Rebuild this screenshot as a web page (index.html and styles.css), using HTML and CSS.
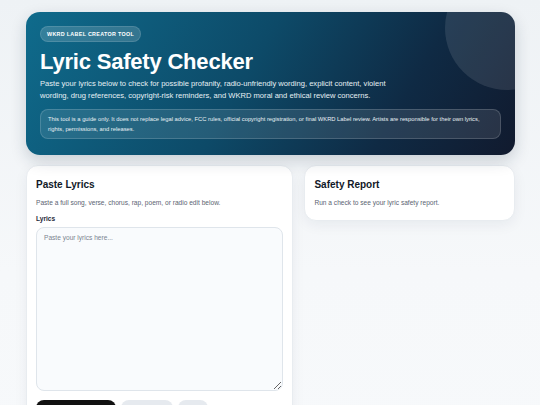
FILE: index.html
```html
<!DOCTYPE html>
<html lang="en">
<head>
<meta charset="utf-8">
<title>Lyric Safety Checker</title>
<link rel="stylesheet" href="styles.css">
</head>
<body>
<div class="page">
  <header class="hero">
    <span class="badge">WKRD LABEL CREATOR TOOL</span>
    <h1 class="title">Lyric Safety Checker</h1>
    <p class="lead">Paste your lyrics below to check for possible profanity, radio-unfriendly wording, explicit content, violent wording, drug references, copyright-risk reminders, and WKRD moral and ethical review concerns.</p>
    <div class="note">This tool is a guide only. It does not replace legal advice, FCC rules, official copyright registration, or final WKRD Label review. Artists are responsible for their own lyrics, rights, permissions, and releases.</div>
  </header>
  <main class="grid">
    <section class="card input-card">
      <h2 class="card-title">Paste Lyrics</h2>
      <p class="card-sub">Paste a full song, verse, chorus, rap, poem, or radio edit below.</p>
      <label class="field-label" for="lyrics">Lyrics</label>
      <textarea id="lyrics" class="lyrics" placeholder="Paste your lyrics here..."></textarea>
      <div class="actions">
        <button class="btn btn-primary">Check Lyrics</button>
        <button class="btn btn-soft btn-sample">Sample</button>
        <button class="btn btn-soft btn-clear">Clear</button>
      </div>
    </section>
    <section class="card report-card">
      <h2 class="card-title">Safety Report</h2>
      <p class="card-sub">Run a check to see your lyric safety report.</p>
    </section>
  </main>
</div>
</body>
</html>
```
FILE: styles.css
```css
* { box-sizing: border-box; }
html, body { margin: 0; padding: 0; }
body {
  font-family: "Liberation Sans", Arial, sans-serif;
  background: linear-gradient(180deg, #eef2f5 0%, #f6f8fa 60%, #f7f9fb 100%);
  color: #111827;
  min-height: 405px;
}
.page {
  padding: 12px 25px 20px 26px;
}
.hero {
  position: relative;
  overflow: hidden;
  border-radius: 14px;
  padding: 14px 14px 16px 14px;
  color: #fff;
  background: linear-gradient(120deg, #0f6b8c 0%, #0d4a68 45%, #0f2a44 75%, #111a2e 100%);
  box-shadow: 0 6px 16px rgba(15, 40, 60, 0.18);
}
.hero::after {
  content: "";
  position: absolute;
  width: 124px;
  height: 124px;
  top: -46px;
  right: -54px;
  border-radius: 50%;
  background: rgba(255, 255, 255, 0.1);
}
.badge {
  display: block;
  width: fit-content;
  height: 16px;
  padding: 0 6px;
  border-radius: 8px;
  background: rgba(255, 255, 255, 0.16);
  border: 1px solid rgba(255, 255, 255, 0.12);
  font-size: 5.4px;
  font-weight: 700;
  letter-spacing: 0.3px;
  line-height: 14px;
}
.title {
  margin: 7px 0 0 0;
  font-size: 22px;
  line-height: 26px;
  font-weight: 700;
  letter-spacing: -0.2px;
}
.lead {
  margin: 3px 0 0 0;
  max-width: 356px;
  font-size: 7.6px;
  line-height: 12px;
  color: #e6f0f4;
}
.note {
  margin-top: 7px;
  padding: 4px 8px 4px 7px;
  border-radius: 8px;
  background: rgba(255, 255, 255, 0.1);
  border: 1px solid rgba(255, 255, 255, 0.16);
  font-size: 5.8px;
  line-height: 10px;
  color: #e8f0f4;
}
.grid {
  margin-top: 10px;
  display: grid;
  grid-template-columns: minmax(0, 1.27fr) minmax(0, 1fr);
  gap: 11px;
  align-items: start;
}
.card {
  background: #fff;
  border-radius: 12px;
  padding: 12px 9px 10px 9px;
  border: 1px solid #e8ecf0;
  box-shadow: 0 4px 14px rgba(20, 40, 60, 0.06);
}
.card-title {
  margin: 0;
  font-size: 10px;
  line-height: 13px;
  font-weight: 700;
  color: #111827;
}
.card-sub {
  margin: 7px 0 0 0;
  font-size: 6.6px;
  line-height: 9px;
  color: #5b6472;
}
.field-label {
  display: block;
  margin-top: 7px;
  font-size: 6.6px;
  line-height: 9px;
  font-weight: 700;
  color: #1f2937;
}
.lyrics {
  display: block;
  width: 100%;
  height: 164px;
  margin-top: 4px;
  padding: 6px 7px;
  border: 1px solid #dfe5eb;
  border-radius: 8px;
  background: #f9fbfd;
  font-family: "Liberation Sans", Arial, sans-serif;
  font-size: 6.6px;
  color: #111827;
  resize: vertical;
}
.lyrics::placeholder { color: #7b8490; }
.actions {
  display: flex;
  gap: 5px;
  margin-top: 9px;
}
.btn {
  height: 22px;
  border: none;
  border-radius: 8px;
  font-family: "Liberation Sans", Arial, sans-serif;
  font-size: 7px;
  font-weight: 700;
  padding: 0 8px;
}
.btn-primary {
  width: 80px;
  background: #111111;
  color: #fff;
}
.btn-soft {
  background: #e6eaef;
  color: #111827;
}
.btn-sample { width: 52px; }
.btn-clear { width: 30px; }
.report-card {
  padding-bottom: 13px;
}
```
